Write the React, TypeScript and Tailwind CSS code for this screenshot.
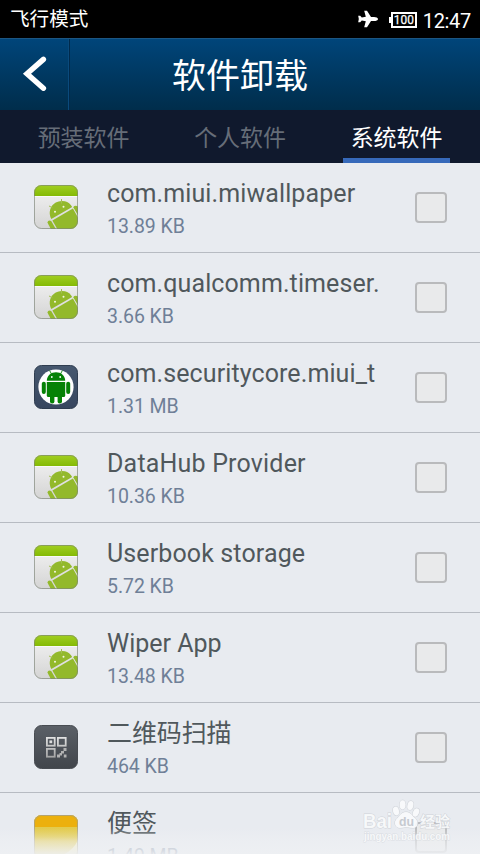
import React from "react";

const TEXT_FONT = "font-['Roboto','Noto_Sans_CJK_SC',sans-serif]";

function PackageIcon({ id }: { id: string }) {
  return (
    <svg width="44" height="44" viewBox="0 0 44 44">
      <defs>
        <linearGradient id={`${id}-body`} x1="0" y1="0" x2="0" y2="1">
          <stop offset="0.2" stopColor="#eeeeee" />
          <stop offset="1" stopColor="#d4d4d4" />
        </linearGradient>
        <linearGradient id={`${id}-top`} x1="0" y1="0" x2="0" y2="1">
          <stop offset="0" stopColor="#a2cf22" />
          <stop offset="1" stopColor="#84ba04" />
        </linearGradient>
        <clipPath id={`${id}-clip`}>
          <rect width="44" height="44" rx="7.5" />
        </clipPath>
      </defs>
      <g clipPath={`url(#${id}-clip)`}>
        <rect width="44" height="44" fill={`url(#${id}-body)`} />
        <rect width="44" height="11" fill={`url(#${id}-top)`} />
        <rect y="11" width="44" height="1" fill="#f8f8f8" />
        <g fill="#93b92b" stroke="none">
          <path d="M17.3 34A12 12 0 0 1 38.2 22Z" />
          <path d="M18.4 35.4L38.9 23.6L44 32.5V44H23.3Z" />
          <path d="M39.2 22.2Q41 19.8 44 21.5V30.3Z" />
          <path d="M13.4 37.6Q14.2 34.6 17.2 36.1L21.8 44H16.8Z" />
        </g>
        <path d="M27.5 18.5V14M18.5 22.7L15 21" stroke="#a3bf55" strokeWidth="1" fill="none" />
        <circle cx="21" cy="26.8" r="1" fill="#f4f8df" />
        <circle cx="29.5" cy="21.8" r="1" fill="#f4f8df" />
      </g>
      <rect x="0.5" y="0.5" width="43" height="43" rx="7" fill="none" stroke="#7d8478" strokeOpacity="0.65" />
    </svg>
  );
}

function SecurityIcon() {
  return (
    <svg width="44" height="44" viewBox="0 0 44 44">
      <defs>
        <linearGradient id="sec-bg" x1="0" y1="0" x2="0" y2="1">
          <stop offset="0" stopColor="#46586f" />
          <stop offset="1" stopColor="#37465f" />
        </linearGradient>
      </defs>
      <rect x="0.5" y="0.5" width="43" height="43" rx="7" fill="url(#sec-bg)" stroke="#2f3d50" />
      <circle cx="22" cy="22" r="17.6" fill="#fff" />
      <g fill="#058205">
        <path d="M12.8 15.8C13 10.5 17 7.3 22 7.3S31 10.5 31.2 15.8Z" />
        <path d="M12.8 17H31.2V30.5Q31.2 32 29.7 32H14.3Q12.8 32 12.8 30.5Z" />
        <rect x="7.8" y="16.8" width="4" height="12.3" rx="2" />
        <rect x="32.2" y="16.8" width="4" height="12.3" rx="2" />
        <rect x="16" y="29" width="4.4" height="9.5" rx="2.1" />
        <rect x="23.6" y="29" width="4.4" height="9.5" rx="2.1" />
      </g>
      <path d="M17.4 8.8L15.6 5.5M26.6 8.8L28.4 5.5" stroke="#058205" strokeWidth="0.9" />
      <circle cx="17.8" cy="12" r="0.9" fill="#fff" />
      <circle cx="26.2" cy="12" r="0.9" fill="#fff" />
    </svg>
  );
}

function ScannerIcon() {
  return (
    <svg width="44" height="44" viewBox="0 0 44 44">
      <defs>
        <linearGradient id="scan-bg" x1="0" y1="0" x2="0" y2="1">
          <stop offset="0" stopColor="#5b6067" />
          <stop offset="1" stopColor="#41454b" />
        </linearGradient>
        <linearGradient id="scan-fg" gradientUnits="userSpaceOnUse" x1="0" y1="12" x2="0" y2="33">
          <stop offset="0" stopColor="#e2e2e2" />
          <stop offset="1" stopColor="#a2a2a2" />
        </linearGradient>
      </defs>
      <rect x="0.5" y="0.5" width="43" height="43" rx="7" fill="url(#scan-bg)" stroke="#484c52" />
      <g fill="none" stroke="url(#scan-fg)" strokeWidth="1.8">
        <rect x="12.9" y="12.9" width="7.8" height="7.8" />
        <rect x="23.9" y="12.9" width="7.8" height="7.8" />
        <rect x="12.9" y="23.9" width="7.8" height="7.8" />
      </g>
      <rect x="15.4" y="15.4" width="2.8" height="2.8" fill="#dedede" />
      <path
        d="M29.5 23H32.5V26H29.5ZM27 26H30V28.5H27ZM23 29.5H26V32.5H23ZM25.5 28H28V30.5H25.5ZM29.8 29.5H32.5V32.5H29.8Z"
        fill="#b2b2b2"
      />
    </svg>
  );
}

function NotesIcon() {
  return (
    <svg width="44" height="44" viewBox="0 0 44 44">
      <defs>
        <linearGradient id="note-bg" x1="0" y1="0" x2="0" y2="1">
          <stop offset="0.27" stopColor="#e2cb50" />
          <stop offset="0.5" stopColor="#e2c737" />
          <stop offset="0.85" stopColor="#e8d368" />
        </linearGradient>
        <clipPath id="note-clip">
          <rect width="44" height="44" rx="7.5" />
        </clipPath>
      </defs>
      <g clipPath="url(#note-clip)">
        <rect width="44" height="44" fill="url(#note-bg)" />
        <rect width="44" height="12" fill="#ecb00d" />
        <path d="M44 25Q39 36 28 40H44Z" fill="#f5ecb5" />
      </g>
      <rect x="0.5" y="0.5" width="43" height="43" rx="7" fill="none" stroke="#a5a08a" strokeOpacity="0.8" />
    </svg>
  );
}

type App = { name: string; size: string; icon: React.ReactNode; tracking: string };

const apps: App[] = [
  { name: "com.miui.miwallpaper", size: "13.89 KB", icon: <PackageIcon id="p1" />, tracking: "tracking-[0.1px]" },
  { name: "com.qualcomm.timeser.", size: "3.66 KB", icon: <PackageIcon id="p2" />, tracking: "tracking-[0.1px]" },
  { name: "com.securitycore.miui_t", size: "1.31 MB", icon: <SecurityIcon />, tracking: "tracking-[0.1px]" },
  { name: "DataHub Provider", size: "10.36 KB", icon: <PackageIcon id="p3" />, tracking: "tracking-[0.19px]" },
  { name: "Userbook storage", size: "5.72 KB", icon: <PackageIcon id="p4" />, tracking: "tracking-[0.12px]" },
  { name: "Wiper App", size: "13.48 KB", icon: <PackageIcon id="p5" />, tracking: "tracking-normal" },
  { name: "二维码扫描", size: "464 KB", icon: <ScannerIcon />, tracking: "tracking-[-0.1px]" },
  { name: "便签", size: "1.49 MB", icon: <NotesIcon />, tracking: "tracking-[-0.1px]" },
];

function AppRow({ app }: { app: App }) {
  return (
    <li className="flex h-[90px] shrink-0 border-b border-[#b7bbc2] pl-[34px]">
      <div className="mt-[22px] w-[73px] shrink-0">{app.icon}</div>
      <div className="w-[308px] shrink-0 pt-[15px]">
        <div className={`h-[32px] whitespace-nowrap text-[25px] leading-[32px] text-[#50585c] ${app.tracking}`}>{app.name}</div>
        <div className="pt-[5px] text-[19.5px] leading-[24px] tracking-[-0.05px] text-[#6f7f97]">{app.size}</div>
      </div>
      <div className="mt-[29px] h-[31px] w-[32px] shrink-0 rounded-[4px] border-2 border-[#b9babc] bg-[#e9eaeb]" />
    </li>
  );
}

function Watermark() {
  return (
    <svg className="absolute left-[360px] top-[796px]" width="96" height="50" viewBox="0 0 96 50">
      <g fill="#fafbfc" fillOpacity="0.9" stroke="#c9cdd3" strokeOpacity="0.8" strokeWidth="1" paintOrder="stroke">
        <ellipse cx="36" cy="15" rx="3" ry="4.4" transform="rotate(-12 36 15)" />
        <ellipse cx="42.6" cy="8.8" rx="3" ry="4.6" />
        <ellipse cx="50.4" cy="9.5" rx="3" ry="4.6" transform="rotate(12 50.4 9.5)" />
        <ellipse cx="56" cy="16.5" rx="3" ry="4.4" transform="rotate(22 56 16.5)" />
        <path d="M46 16C41 16 40 20 37 22.5C33 26 35 32 40 32C43 32 44 31.3 46 31.3S50 32 53 32C58 32 59 26 55.5 22.5C52 20 51 16 46 16Z" />
        <text x="3" y="32" fontSize="20.5" fontWeight="700" fontFamily="Liberation Sans, sans-serif" textLength="29" lengthAdjust="spacingAndGlyphs">Bai</text>
        <text x="60" y="31" fontSize="15" fontWeight="700" fontFamily="Noto Sans CJK SC, sans-serif">经验</text>
        <text x="4" y="43.5" fontSize="10.5" fontWeight="700" fontFamily="Liberation Sans, sans-serif" textLength="86" lengthAdjust="spacingAndGlyphs" strokeOpacity="0.5">jingyan.baidu.com</text>
      </g>
      <text x="39" y="30" fontSize="13.5" fontWeight="700" fill="#c6cad0" fontFamily="Liberation Sans, sans-serif" textLength="15" lengthAdjust="spacingAndGlyphs">du</text>
    </svg>
  );
}

export default function App() {
  return (
    <div className={`relative flex h-[854px] w-[480px] flex-col overflow-hidden bg-[#e8ebf0] ${TEXT_FONT}`}>
      <div className="flex h-[38px] shrink-0 items-center bg-black pl-[10px] pr-[9px] text-white">
        <span className="flex-1 pt-[2px] text-[19.6px] leading-[36px]">飞行模式</span>
        <svg width="22" height="20" viewBox="0 0 22 20" fill="#fff">
          <path d="M21 10C21 11.4 19 12.1 17 12.1H14L10 18.3H7.2L8.8 12.2L4.8 11.5L3.2 13.2H1.2L1.8 10L1.2 6.8H3.2L4.8 8.5L8.8 7.8L7.2 1.7H10L14 7.9H17C19 7.9 21 8.6 21 10Z" />
        </svg>
        <svg className="ml-[10px] mt-[1px]" width="28" height="16" viewBox="0 0 28 16">
          <path d="M3 1H27V15H3Z" fill="none" stroke="#fff" strokeWidth="2" />
          <path d="M0 5H3V11H0Z" fill="#fff" />
          <text x="4.8" y="12.4" fontSize="12.5" fontFamily="Roboto, sans-serif" fill="#fff" stroke="#fff" strokeWidth="0.25" textLength="20" lengthAdjust="spacingAndGlyphs">100</text>
        </svg>
        <span className="ml-[6px] pt-[4px] text-[20px] leading-[34px] tracking-[-0.3px]">12:47</span>
      </div>

      <header className="grid h-[72px] shrink-0 grid-cols-[70px_1fr_70px] border-t border-[#1c5683] bg-linear-to-b from-[#00457a] to-[#002d4b]">
        <button className="flex items-center border-r border-[#002a4c] shadow-[inset_-1px_0_0_#0a4a7c]">
          <svg className="mb-[5px] ml-[22px]" width="26" height="36" viewBox="0 0 26 36">
            <path d="M21.4 4.4L5 18.8L21.4 33.2" fill="none" stroke="#fff" strokeWidth="5.4" strokeLinecap="round" />
          </svg>
        </button>
        <h1 className="pt-[3px] text-center text-[34px] leading-[69px] text-white">软件卸载</h1>
      </header>

      <nav className="flex h-[53px] shrink-0 justify-between bg-[#10192d] px-[30px] text-[23px] text-[#666d78]">
        <div className="w-[107px] pt-[3px] text-center leading-[51px] tracking-[-0.1px]">预装软件</div>
        <div className="w-[107px] pt-[3px] text-center leading-[51px] tracking-[-0.1px]">个人软件</div>
        <div className="h-[53px] w-[107px] border-b-[5px] border-[#3669ba] pt-[3px] text-center leading-[51px] tracking-[-0.1px] text-white">系统软件</div>
      </nav>

      <ul className="flex flex-1 flex-col overflow-hidden">
        {apps.map((app) => (
          <AppRow key={app.name} app={app} />
        ))}
      </ul>
      <div className="absolute inset-x-0 bottom-0 h-[26px] bg-linear-to-b from-[#eef0f3]/0 via-[#eef0f3]/60 to-[#eef0f3]/90" />
      <Watermark />
    </div>
  );
}
